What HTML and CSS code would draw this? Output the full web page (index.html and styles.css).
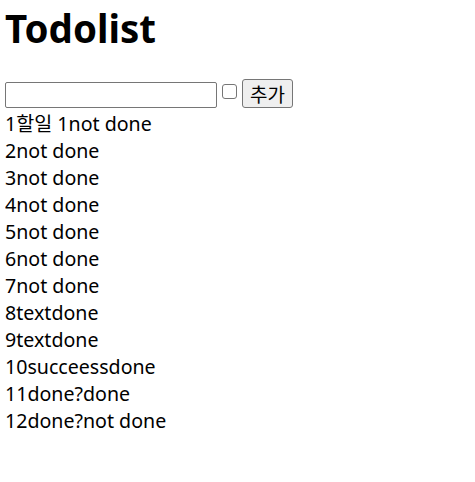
FILE: index.html
```html
<!DOCTYPE html>
<html lang="ko">
<head>
    <meta charset="UTF-8">
    <title>Todolist</title>
    <link rel="stylesheet" href="styles.css">
</head>
<body>
    <h1>Todolist</h1>
    <form class="todo-form">
        <input type="text" class="todo-input">
        <input type="checkbox" class="todo-check">
        <button type="button" class="add-btn">추가</button>
    </form>
    <div class="todo-list">
        <div class="todo-item">1할일 1not done</div>
        <div class="todo-item">2not done</div>
        <div class="todo-item">3not done</div>
        <div class="todo-item">4not done</div>
        <div class="todo-item">5not done</div>
        <div class="todo-item">6not done</div>
        <div class="todo-item">7not done</div>
        <div class="todo-item">8textdone</div>
        <div class="todo-item">9textdone</div>
        <div class="todo-item">10succeessdone</div>
        <div class="todo-item">11done?done</div>
        <div class="todo-item">12done?not done</div>
    </div>
</body>
</html>
```
FILE: styles.css
```css
body {
    margin: 5px;
    font-family: "Noto Sans", "Noto Sans CJK KR", sans-serif;
    font-size: 19.6px;
    color: #000;
    background: #fff;
}

h1 {
    margin: 0;
    font-size: 38.5px;
    line-height: 46px;
    font-weight: bold;
}

.todo-form {
    display: flex;
    align-items: flex-start;
    margin-top: 28px;
}

.todo-input {
    box-sizing: border-box;
    width: 212px;
    height: 26px;
    margin: 3px 0 0 0;
    border: 1px solid #767676;
    border-radius: 2px;
}

.todo-check {
    appearance: none;
    box-sizing: border-box;
    width: 15px;
    height: 15px;
    margin: 5px 5px 0 5px;
    border: 1px solid #767676;
    border-radius: 3px;
    background: #fff;
}

.add-btn {
    box-sizing: border-box;
    width: 51px;
    height: 29px;
    padding: 0;
    font-family: "Noto Sans CJK KR", sans-serif;
    font-size: 19px;
    background: #efefef;
    border: 1px solid #767676;
    border-radius: 3px;
}

.todo-list {
    margin-top: 2px;
}

.todo-item {
    line-height: 27px;
}
```
